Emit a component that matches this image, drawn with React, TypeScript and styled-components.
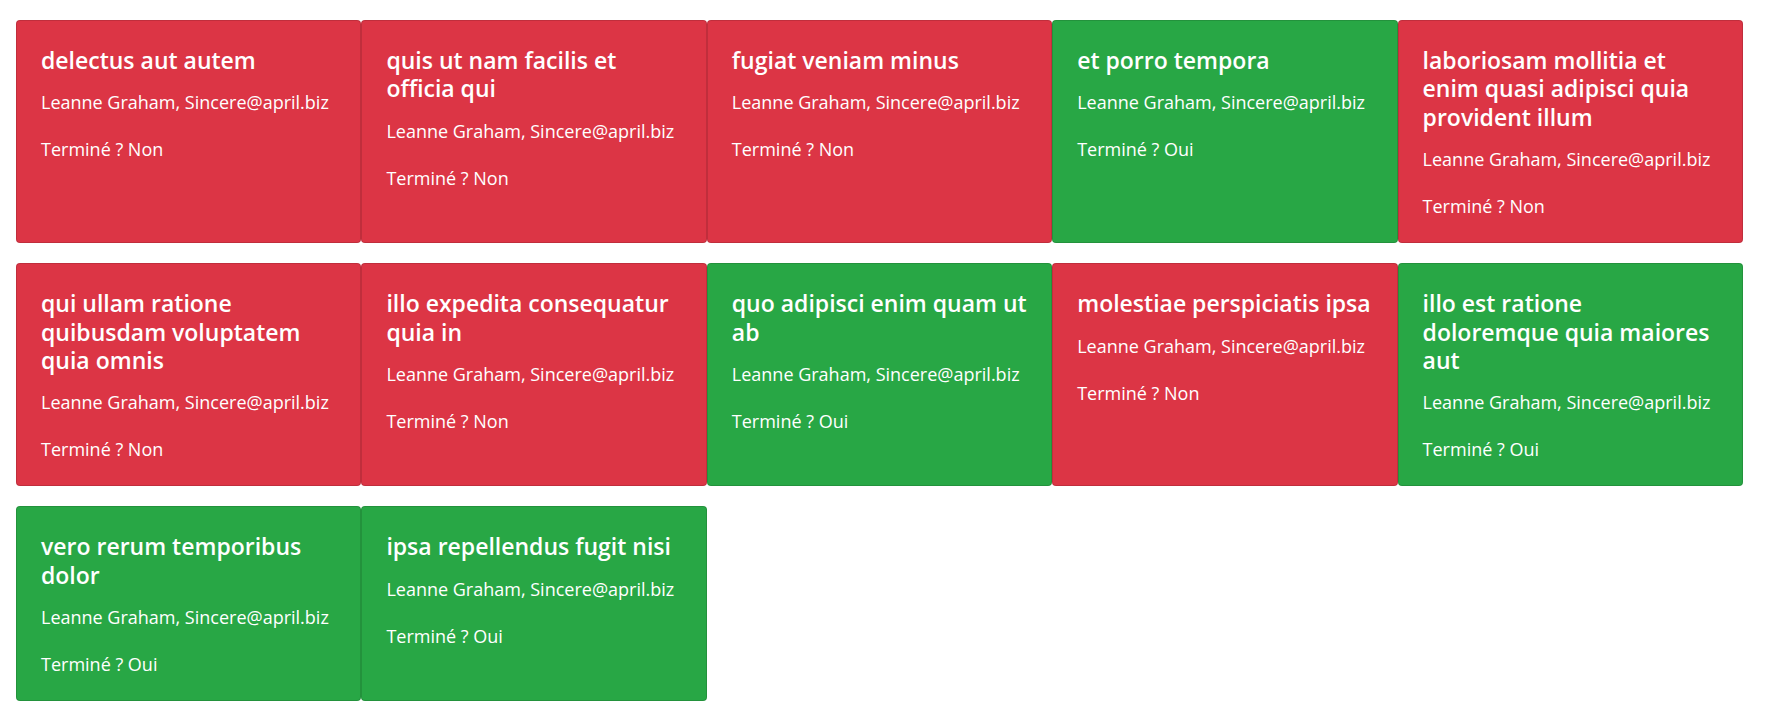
import React from "react";
import styled, { createGlobalStyle } from "styled-components";

const GlobalStyle = createGlobalStyle`
  html, body { margin: 0; padding: 0; background: #fff; }
  body {
    font-family: "Open Sans", "Noto Sans", "Liberation Sans", sans-serif;
    color: #212529;
  }
`;

type Todo = { title: string; done: boolean };

const todos: Todo[] = [
  { title: "delectus aut autem", done: false },
  { title: "quis ut nam facilis et officia qui", done: false },
  { title: "fugiat veniam minus", done: false },
  { title: "et porro tempora", done: true },
  { title: "laboriosam mollitia et enim quasi adipisci quia provident illum", done: false },
  { title: "qui ullam ratione quibusdam voluptatem quia omnis", done: false },
  { title: "illo expedita consequatur quia in", done: false },
  { title: "quo adipisci enim quam ut ab", done: true },
  { title: "molestiae perspiciatis ipsa", done: false },
  { title: "illo est ratione doloremque quia maiores aut", done: true },
  { title: "vero rerum temporibus dolor", done: true },
  { title: "ipsa repellendus fugit nisi", done: true },
];

const Page = styled.main`
  padding: 20px 0 24px 16px;
`;

const Grid = styled.div`
  display: grid;
  grid-template-columns: repeat(5, 1fr);
  row-gap: 20px;
  width: 1727px;
`;

const Card = styled.article<{ $done: boolean }>`
  display: flex;
  flex-direction: column;
  background: ${(p) => (p.$done ? "#28a745" : "#dc3545")};
  color: #fff;
  border: 1px solid rgba(0, 0, 0, 0.125);
  border-radius: 4px;
  padding: 25px 24px 22px;
  min-width: 0;
`;

const Title = styled.h5`
  margin: 0 0 15px;
  font-size: 23px;
  line-height: 28.4px;
  font-weight: 600;
`;

const Text = styled.p`
  margin: 0 0 20px;
  font-size: 18px;
  line-height: 27px;
  font-weight: 400;
  &:last-child { margin-bottom: 0; }
`;

export default function App() {
  return (
    <>
      <GlobalStyle />
      <Page>
        <Grid>
          {todos.map((t, i) => (
            <Card key={i} $done={t.done}>
              <Title>{t.title}</Title>
              <Text>Leanne Graham, Sincere@april.biz</Text>
              <Text>Terminé ? {t.done ? "Oui" : "Non"}</Text>
            </Card>
          ))}
        </Grid>
      </Page>
    </>
  );
}
